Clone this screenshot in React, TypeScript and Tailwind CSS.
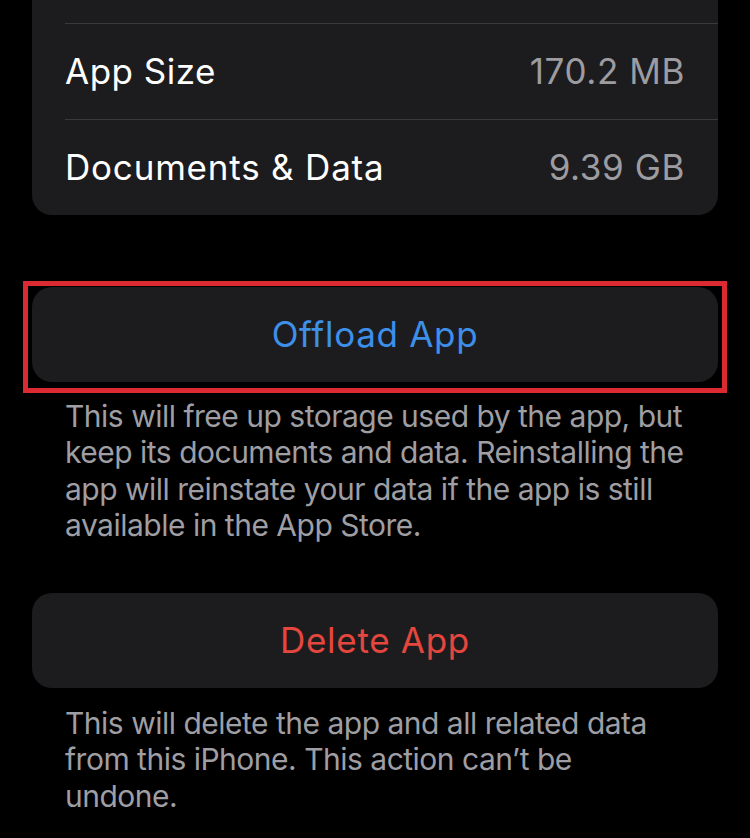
import React from "react";

export default function App() {
  const font = { fontFamily: "Inter, 'Noto Sans', sans-serif" };
  return (
    <div className="w-[750px] h-[838px] bg-black overflow-hidden text-white" style={font}>
      <div className="px-[32px]">
        <div className="bg-[#1c1c1e] rounded-b-[20px]">
          <div className="h-[23px]" />
          <div className="ml-[33px] border-t border-[#3a3a3c] h-[96px] flex items-center justify-between pr-[33px]">
            <span className="text-[35px] tracking-[0.5px]">App Size</span>
            <span className="text-[35px] tracking-[0.6px] text-[#9c9ca1]">170.2 MB</span>
          </div>
          <div className="ml-[33px] border-t border-[#3a3a3c] h-[96px] flex items-center justify-between pr-[33px]">
            <span className="text-[35px] tracking-[0.8px]">Documents &amp; Data</span>
            <span className="text-[35px] tracking-[0.6px] text-[#9c9ca1]">9.39 GB</span>
          </div>
        </div>

        <div className="relative mt-[72px]">
          <div className="h-[95px] bg-[#1c1c1e] rounded-[20px] flex items-center justify-center">
            <span className="text-[35px] tracking-[0.7px] text-[#3d8fe8]">Offload App</span>
          </div>
          <div className="absolute left-[-9px] right-[-9px] top-[-6px] bottom-[-11px] border-[5px] border-[#dc2a32] pointer-events-none" />
        </div>

        <p className="mt-[16px] px-[33px] text-[30px] leading-[36.3px] text-[#9e9ea3] tracking-[-0.5px]">
          This will free up storage used by the app, but keep its documents and data. Reinstalling the app will reinstate your data if the app is still available in the App Store.
        </p>

        <div className="mt-[50px] h-[95px] bg-[#1c1c1e] rounded-[20px] flex items-center justify-center">
          <span className="text-[35px] tracking-[0.7px] text-[#e5463e]">Delete App</span>
        </div>

        <p className="mt-[17px] px-[33px] text-[30px] leading-[36.3px] text-[#9e9ea3] tracking-[-0.5px]">
          This will delete the app and all related data from this iPhone. This action can’t be undone.
        </p>
      </div>
    </div>
  );
}
